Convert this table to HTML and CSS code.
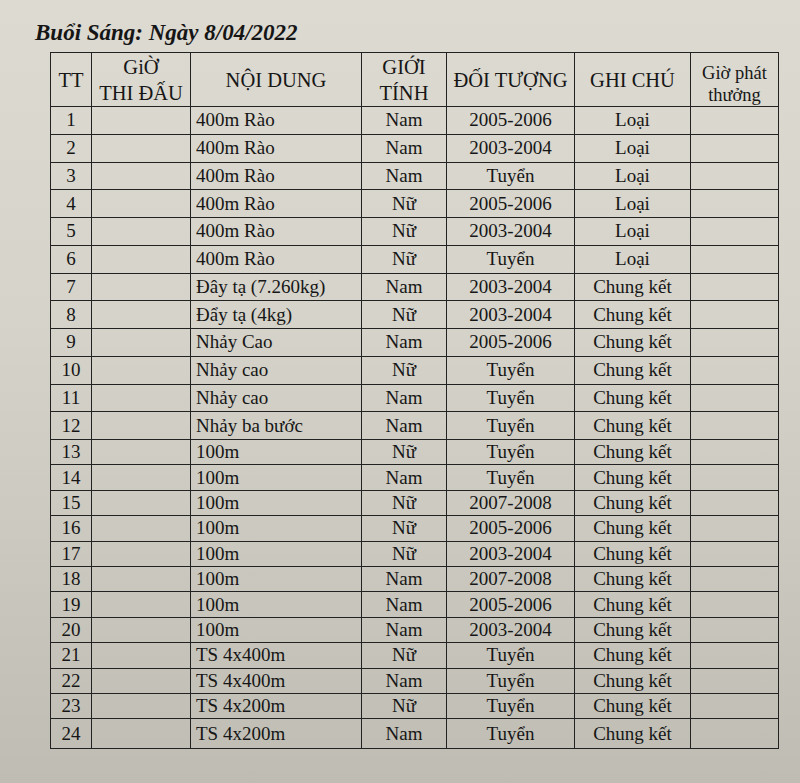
FILE: index.html
```html
<!DOCTYPE html>
<html lang="vi">
<head>
<meta charset="utf-8">
<title>Buổi Sáng: Ngày 8/04/2022</title>
<link rel="stylesheet" href="styles.css">
</head>
<body>
<div class="sheet">
  <h1 class="title">Buổi Sáng: Ngày 8/04/2022</h1>
  <table class="schedule">
    <colgroup>
      <col class="c-tt"><col class="c-gio"><col class="c-nd"><col class="c-gt"><col class="c-dt"><col class="c-gc"><col class="c-gp">
    </colgroup>
    <thead>
      <tr>
        <th>TT</th>
        <th class="two">GiỜ<br>THI ĐẤU</th>
        <th>NỘI DUNG</th>
        <th class="two">GIỚI<br>TÍNH</th>
        <th>ĐỐI TƯỢNG</th>
        <th>GHI CHÚ</th>
        <th class="small">Giờ phát<br>thưởng</th>
      </tr>
    </thead>
    <tbody>
      <tr><td>1</td><td></td><td class="nd">400m Rào</td><td>Nam</td><td>2005-2006</td><td>Loại</td><td></td></tr>
      <tr><td>2</td><td></td><td class="nd">400m Rào</td><td>Nam</td><td>2003-2004</td><td>Loại</td><td></td></tr>
      <tr><td>3</td><td></td><td class="nd">400m Rào</td><td>Nam</td><td>Tuyển</td><td>Loại</td><td></td></tr>
      <tr><td>4</td><td></td><td class="nd">400m Rào</td><td>Nữ</td><td>2005-2006</td><td>Loại</td><td></td></tr>
      <tr><td>5</td><td></td><td class="nd">400m Rào</td><td>Nữ</td><td>2003-2004</td><td>Loại</td><td></td></tr>
      <tr><td>6</td><td></td><td class="nd">400m Rào</td><td>Nữ</td><td>Tuyển</td><td>Loại</td><td></td></tr>
      <tr><td>7</td><td></td><td class="nd">Đây tạ (7.260kg)</td><td>Nam</td><td>2003-2004</td><td>Chung kết</td><td></td></tr>
      <tr><td>8</td><td></td><td class="nd">Đẩy tạ (4kg)</td><td>Nữ</td><td>2003-2004</td><td>Chung kết</td><td></td></tr>
      <tr><td>9</td><td></td><td class="nd">Nhảy Cao</td><td>Nam</td><td>2005-2006</td><td>Chung kết</td><td></td></tr>
      <tr><td>10</td><td></td><td class="nd">Nhảy cao</td><td>Nữ</td><td>Tuyển</td><td>Chung kết</td><td></td></tr>
      <tr><td>11</td><td></td><td class="nd">Nhảy cao</td><td>Nam</td><td>Tuyển</td><td>Chung kết</td><td></td></tr>
      <tr><td>12</td><td></td><td class="nd">Nhảy ba bước</td><td>Nam</td><td>Tuyển</td><td>Chung kết</td><td></td></tr>
      <tr><td>13</td><td></td><td class="nd">100m</td><td>Nữ</td><td>Tuyển</td><td>Chung kết</td><td></td></tr>
      <tr><td>14</td><td></td><td class="nd">100m</td><td>Nam</td><td>Tuyển</td><td>Chung kết</td><td></td></tr>
      <tr><td>15</td><td></td><td class="nd">100m</td><td>Nữ</td><td>2007-2008</td><td>Chung kết</td><td></td></tr>
      <tr><td>16</td><td></td><td class="nd">100m</td><td>Nữ</td><td>2005-2006</td><td>Chung kết</td><td></td></tr>
      <tr><td>17</td><td></td><td class="nd">100m</td><td>Nữ</td><td>2003-2004</td><td>Chung kết</td><td></td></tr>
      <tr><td>18</td><td></td><td class="nd">100m</td><td>Nam</td><td>2007-2008</td><td>Chung kết</td><td></td></tr>
      <tr><td>19</td><td></td><td class="nd">100m</td><td>Nam</td><td>2005-2006</td><td>Chung kết</td><td></td></tr>
      <tr><td>20</td><td></td><td class="nd">100m</td><td>Nam</td><td>2003-2004</td><td>Chung kết</td><td></td></tr>
      <tr><td>21</td><td></td><td class="nd">TS 4x400m</td><td>Nữ</td><td>Tuyển</td><td>Chung kết</td><td></td></tr>
      <tr><td>22</td><td></td><td class="nd">TS 4x400m</td><td>Nam</td><td>Tuyển</td><td>Chung kết</td><td></td></tr>
      <tr><td>23</td><td></td><td class="nd">TS 4x200m</td><td>Nữ</td><td>Tuyển</td><td>Chung kết</td><td></td></tr>
      <tr><td>24</td><td></td><td class="nd">TS 4x200m</td><td>Nam</td><td>Tuyển</td><td>Chung kết</td><td></td></tr>
    </tbody>
  </table>
</div>
</body>
</html>
```
FILE: styles.css
```css
html, body {
  margin: 0;
  padding: 0;
}
body {
  width: 800px;
  height: 783px;
  overflow: hidden;
  background: linear-gradient(180deg, #dddad2 0%, #d5d3ca 40%, #c9c7bd 75%, #bfbdb3 100%);
  font-family: "Liberation Serif", "Times New Roman", serif;
  color: #161616;
}
.sheet {
  padding: 20px 0 0 0;
}
.title {
  margin: 0 0 6px 35px;
  font-size: 23px;
  line-height: 26px;
  font-weight: bold;
  font-style: italic;
  color: #151515;
}
.schedule {
  margin-left: 50px;
  border-collapse: collapse;
  table-layout: fixed;
  width: 728px;
  font-size: 19px;
}
.c-tt { width: 41px; }
.c-gio { width: 99px; }
.c-nd { width: 171px; }
.c-gt { width: 85px; }
.c-dt { width: 128px; }
.c-gc { width: 116px; }
.c-gp { width: 88px; }

.schedule th,
.schedule td {
  border: 1.5px solid #222;
  padding: 0;
  text-align: center;
  vertical-align: middle;
  white-space: nowrap;
  overflow: hidden;
}
.schedule thead tr {
  height: 54px;
}
.schedule th {
  font-weight: normal;
  font-size: 20.5px;
  line-height: 25px;
  padding-top: 2px;
}
.schedule th.two {
  line-height: 26px;
  padding-top: 0;
}
.schedule th.small {
  font-size: 18.5px;
  line-height: 22px;
  padding-top: 8px;
}
.schedule tbody tr {
  height: 25.4px;
}
.schedule tbody tr:nth-child(-n+12) {
  height: 27.75px;
}
.schedule tbody tr:last-child {
  height: 30px;
}
.schedule td {
  line-height: 20px;
}
.schedule td.nd {
  text-align: left;
  padding-left: 5px;
}
```
